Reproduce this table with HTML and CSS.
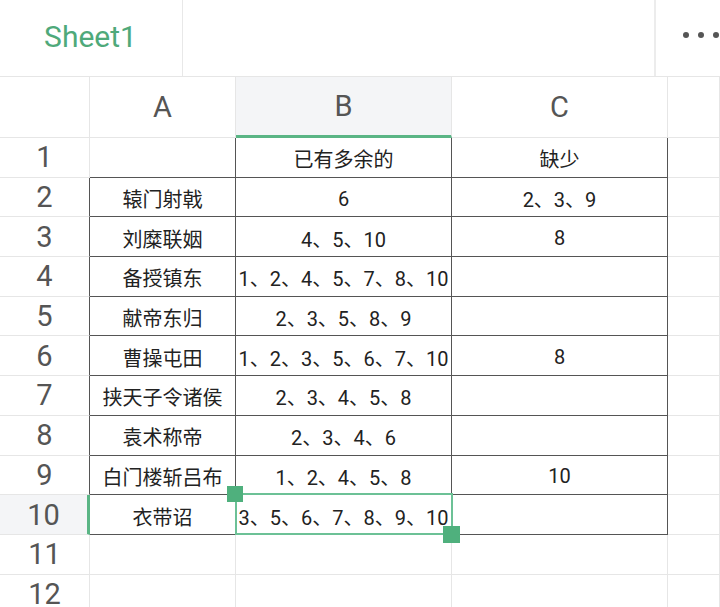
FILE: index.html
```html
<!DOCTYPE html>
<html lang="zh">
<head>
<meta charset="utf-8">
<link rel="stylesheet" href="styles.css">
</head>
<body>
<div class="app">
  <div class="topbar">
    <div class="tab">Sheet1</div>
    <div class="spacer"></div>
    <div class="more"><span class="dot"></span><span class="dot"></span><span class="dot"></span></div>
  </div>
  <div class="sheet">
    <div class="c corner"></div>
    <div class="c hd">A</div>
    <div class="c hd hd-sel">B</div>
    <div class="c hd">C</div>
    <div class="c hd"></div>

    <div class="c rh">1</div>
    <div class="c d dr"></div>
    <div class="c d dr">已有多余的</div>
    <div class="c d dr">缺少</div>
    <div class="c"></div>

    <div class="c rh dr">2</div>
    <div class="c d dr">辕门射戟</div>
    <div class="c d dr">6</div>
    <div class="c d dr">2、3、9</div>
    <div class="c"></div>

    <div class="c rh dr">3</div>
    <div class="c d dr">刘糜联姻</div>
    <div class="c d dr">4、5、10</div>
    <div class="c d dr">8</div>
    <div class="c"></div>

    <div class="c rh dr">4</div>
    <div class="c d dr">备授镇东</div>
    <div class="c d dr">1、2、4、5、7、8、10</div>
    <div class="c d dr"></div>
    <div class="c"></div>

    <div class="c rh dr">5</div>
    <div class="c d dr">献帝东归</div>
    <div class="c d dr">2、3、5、8、9</div>
    <div class="c d dr"></div>
    <div class="c"></div>

    <div class="c rh dr">6</div>
    <div class="c d dr">曹操屯田</div>
    <div class="c d dr">1、2、3、5、6、7、10</div>
    <div class="c d dr">8</div>
    <div class="c"></div>

    <div class="c rh dr">7</div>
    <div class="c d dr">挟天子令诸侯</div>
    <div class="c d dr">2、3、4、5、8</div>
    <div class="c d dr"></div>
    <div class="c"></div>

    <div class="c rh dr">8</div>
    <div class="c d dr">袁术称帝</div>
    <div class="c d dr">2、3、4、6</div>
    <div class="c d dr"></div>
    <div class="c"></div>

    <div class="c rh dr">9</div>
    <div class="c d dr">白门楼斩吕布</div>
    <div class="c d dr">1、2、4、5、8</div>
    <div class="c d dr">10</div>
    <div class="c"></div>

    <div class="c rh rh-sel">10</div>
    <div class="c d dr">衣带诏</div>
    <div class="c d dr active">3、5、6、7、8、9、10<span class="sel"></span><span class="handle h-tl"></span><span class="handle h-br"></span></div>
    <div class="c d dr"></div>
    <div class="c"></div>

    <div class="c rh">11</div>
    <div class="c"></div>
    <div class="c"></div>
    <div class="c"></div>
    <div class="c"></div>

    <div class="c rh">12</div>
    <div class="c"></div>
    <div class="c"></div>
    <div class="c"></div>
    <div class="c"></div>
  </div>
</div>
</body>
</html>
```

FILE: styles.css
```css
html, body {
  margin: 0;
  padding: 0;
  background: #ffffff;
}
body {
  width: 720px;
  height: 607px;
  overflow: hidden;
  font-family: Roboto, "Noto Sans CJK SC", sans-serif;
}
.app {
  display: flex;
  flex-direction: column;
  height: 607px;
}
.topbar {
  display: flex;
  height: 77px;
  box-sizing: border-box;
  border-bottom: 1px solid #e6e6e6;
  flex: none;
}
.tab {
  width: 183px;
  box-sizing: border-box;
  border-right: 1px solid #e8e8e8;
  display: flex;
  align-items: center;
  justify-content: center;
  padding-bottom: 4px;
  padding-right: 1px;
  font-size: 30px;
  color: #4fa97a;
}
.spacer {
  flex: 1;
}
.more {
  width: 66px;
  box-sizing: border-box;
  border-left: 2px solid #ececec;
  display: flex;
  align-items: center;
  gap: 9px;
  padding-left: 27px;
  padding-bottom: 6px;
}
.dot {
  width: 6px;
  height: 6px;
  border-radius: 50%;
  background: #555555;
  flex: none;
}
.sheet {
  display: grid;
  grid-template-columns: 90px 146px 216px 216px 1fr;
  grid-template-rows: 61px repeat(12, 39.7px);
  flex: none;
}
.c {
  box-sizing: border-box;
  border-right: 1px solid #e6e6e6;
  border-bottom: 1px solid #e6e6e6;
  display: flex;
  align-items: center;
  justify-content: center;
  font-size: 20px;
  color: #222222;
  white-space: nowrap;
  padding-top: 3px;
}
.hd {
  font-size: 29px;
  color: #555555;
  padding-top: 0;
}
.hd-sel {
  background: #f4f5f7;
  border-bottom: 3px solid #5ab585;
}
.rh {
  font-size: 29px;
  color: #555555;
  padding-top: 0;
}
.rh-sel {
  background: #f4f5f7;
  border-right: 3px solid #5ab585;
}
.d {
  border-bottom-color: #555555;
}
.dr {
  border-right-color: #555555;
}
.active {
  position: relative;
}
.sel {
  position: absolute;
  left: -1px;
  top: -2px;
  right: -2px;
  bottom: -1px;
  border: 2px solid #6cc196;
}
.handle {
  position: absolute;
  width: 16px;
  height: 16px;
  background: #4fb07d;
}
.h-tl {
  left: -9px;
  top: -9px;
}
.h-br {
  right: -9px;
  bottom: -9px;
  width: 17px;
  height: 17px;
}
```
